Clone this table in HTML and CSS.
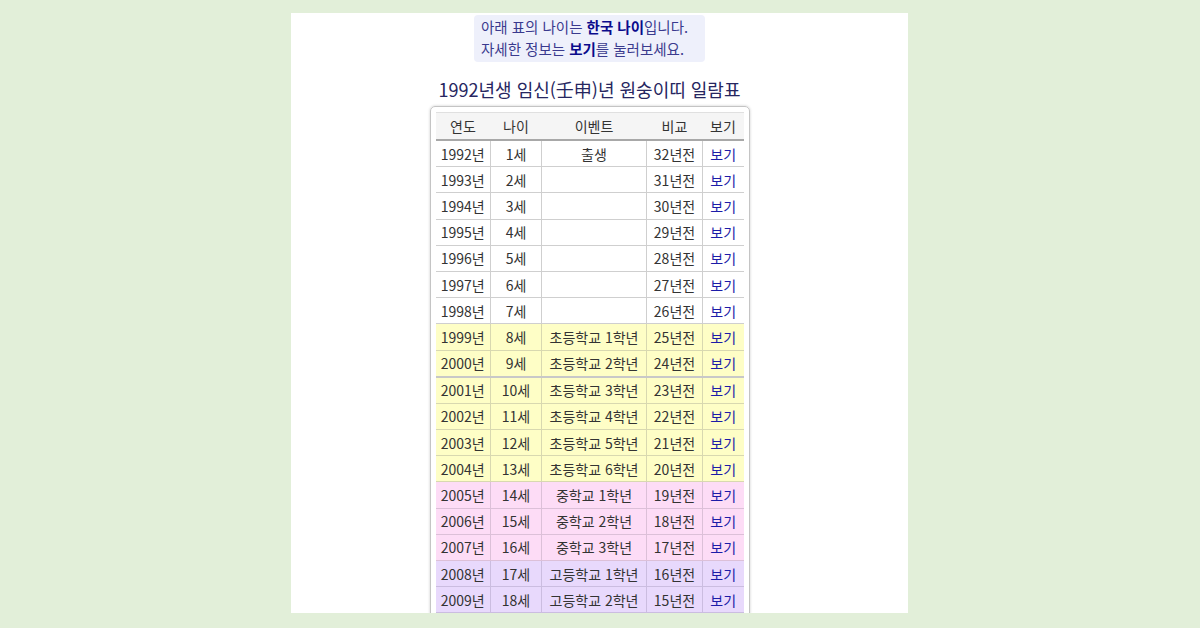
FILE: index.html
```html
<!DOCTYPE html>
<html lang="ko">
<head>
    <meta charset="UTF-8">
    <meta name="viewport" content="width=device-width, initial-scale=1.0">
    <title>1992년생 일람표</title>
    <link rel="stylesheet" href="styles.css">
</head>
<body>
    <div class="page">
        <div class="top-line"></div>
        <div class="note">
            아래 표의 나이는 <b>한국 나이</b>입니다.<br>
            자세한 정보는 <b>보기</b>를 눌러보세요.
        </div>

        <h2 class="title">1992년생 임신(壬申)년 원숭이띠 일람표</h2>

        <div class="table-box">
            <table class="age-table">
                <thead>
                    <tr>
                        <th class="c-year">연도</th>
                        <th class="c-age">나이</th>
                        <th class="c-event">이벤트</th>
                        <th class="c-diff">비교</th>
                        <th class="c-view">보기</th>
                    </tr>
                </thead>
                <tbody id="rows"></tbody>
            </table>
        </div>
    </div>

    <script>
        const events = {
            1992: '출생',
            1999: '초등학교 1학년', 2000: '초등학교 2학년', 2001: '초등학교 3학년',
            2002: '초등학교 4학년', 2003: '초등학교 5학년', 2004: '초등학교 6학년',
            2005: '중학교 1학년', 2006: '중학교 2학년', 2007: '중학교 3학년',
            2008: '고등학교 1학년', 2009: '고등학교 2학년'
        };

        // row colour by school stage
        function stage(year) {
            if (year >= 2008) return 'high';
            if (year >= 2005) return 'middle';
            if (year >= 1999) return 'elem';
            return '';
        }

        const tbody = document.getElementById('rows');
        for (let year = 1992; year <= 2009; year++) {
            const tr = document.createElement('tr');
            tr.className = stage(year);
            if (year === 2001) tr.classList.add('gap');
            tr.innerHTML = `<td>${year}년</td><td>${year - 1991}세</td><td>${events[year] || ''}</td>` +
                `<td>${2024 - year}년전</td><td><a href="#">보기</a></td>`;
            tbody.appendChild(tr);
        }
    </script>
</body>
</html>
```

FILE: styles.css
```css
html, body {
    margin: 0;
    padding: 0;
    height: 100%;
    background-color: #e2efd9;
    font-family: "Noto Sans CJK KR", "Noto Sans", sans-serif;
    color: #333;
}

.page {
    width: 597px;
    height: 600px;
    margin: 13px 0 0 291px;
    padding-right: 20px;
    background-color: #fff;
    overflow: hidden;
    display: flex;
    flex-direction: column;
    align-items: center;
}

.top-line {
    align-self: stretch;
    height: 1px;
    margin: 4px -20px 0 0;
    background-color: #d4d4d4;
}

.note {
    position: relative;
    margin-top: -2px;
    padding: 1px 6px 2px 7px;
    width: 218px;
    background-color: #eef0fb;
    border-radius: 4px;
    font-size: 14.5px;
    line-height: 22px;
    color: #3a3a8e;
}

.note b {
    color: #0b0b8c;
}

.title {
    margin: 14px 0 0 0;
    font-size: 18px;
    font-weight: normal;
    line-height: 26px;
    color: #262660;
}

.table-box {
    margin-top: 4px;
    padding: 5px;
    border: 1px solid #c4c4c4;
    border-radius: 5px;
    box-shadow: 0 0 3px rgba(0, 0, 0, 0.2);
}

.age-table {
    border-collapse: collapse;
    font-size: 14px;
    width: 308px;
}

.age-table th {
    height: 26px;
    font-weight: normal;
    background-color: #f5f5f5;
    border-top: 1px solid #e0e0e0;
    border-bottom: 2px solid #a8a8a8;
    color: #333;
    padding: 0;
}

.age-table td {
    height: 25.2px;
    padding: 0;
    text-align: center;
    border: 1px solid #cfcfcf;
    line-height: 18px;
    white-space: nowrap;
}

.age-table td:first-child {
    border-left: none;
}

.age-table td:last-child {
    border-right: none;
}

.c-year { width: 55px; }
.c-age { width: 51px; }
.c-event { width: 105px; }
.c-diff { width: 56px; }
.c-view { width: 41px; }

.age-table a {
    color: #1c1ca8;
    text-decoration: none;
}

tr.elem td {
    background-color: #fefec6;
    border-color: #d8d8b0;
}

tr.gap td {
    border-top: 2px solid #c8c8c8;
}

tr.middle td {
    background-color: #fddcf6;
    border-color: #dcc0d8;
}

tr.high td {
    background-color: #e8d9fc;
    border-color: #cbbde0;
}
```
